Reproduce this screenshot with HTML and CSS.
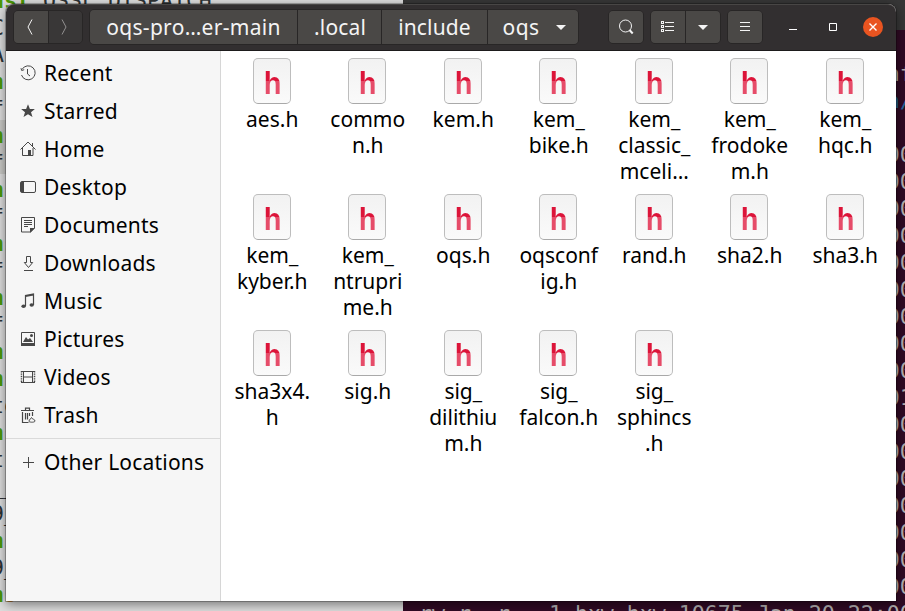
FILE: index.html
```
<!DOCTYPE html>
<html lang="en">
<head>
<meta charset="utf-8">
<title>oqs</title>
<link rel="stylesheet" href="styles.css">
</head>
<body>
<div class="desktop">
<div class="editor">
<pre><i>nst</i> OSSL_DISPATCH
C
A
<i>n</i><b>s</b>
f
<i>n</i><b>s</b>
f
<i>n</i><b>s</b>
f
<i>n</i><b>s</b>
f
<i>n</i><b>s</b>
f
<i>n</i><b>s</b>
<i>n</i><b>s</b>
to
<i>n</i><b>s</b>
t
__
9_
<i>n</i><b>s</b>
9_
<i>n</i><b>s</b>
        _
      d      h  f</pre>
</div>
<div class="terminal">
<div class="term-title">hxw@ubuntu: ~/Desktop/oqs-provider</div>
<pre class="term-text">
                                     nf
                                     <em>n/</em>

                                     00
                                     00
                                     00
                                     00
                                     00
                                     00
                                     00
                                     00
                                     00
                                     01
                                     00
                                     00
                                     00
                                     00
                                     00
                                     00
                                     00
-rw-r--r-- 1 hxw hxw 10675 Jan 20 22:00</pre>
</div>
</div>

<div class="window">
<header class="bar">
<div class="group nav">
<button class="btn"><svg width="14" height="20" viewBox="0 0 14 20"><path d="M9 2.500L5 10l4 7.500"/></svg></button>
<button class="btn off"><svg width="14" height="20" viewBox="0 0 14 20"><path d="M5 2.500L9 10l-4 7.500"/></svg></button>
</div>
<div class="group path">
<button class="btn p1"><span>oqs-pro…er-main</span></button>
<button class="btn p2"><span>.local</span></button>
<button class="btn p3"><span>include</span></button>
<button class="btn p4"><span>oqs</span><svg width="10" height="5" viewBox="0 0 10 5"><path class="fill" d="M0 0h10L5 5z"/></svg></button>
</div>
<div class="group search"><button class="btn"><svg width="16" height="16" viewBox="0 0 16 16"><circle cx="7.500" cy="7" r="6"/><path d="M11.500 11l3.200 3.500" stroke-width="2"/></svg></button></div>
<div class="group view">
<button class="btn"><svg width="14" height="12" viewBox="0 0 14 12" shape-rendering="crispEdges"><path d="M.5.5h2v2h-2zM.5 4.500h2v2h-2zM.5 8.500h2v2h-2zM4 1.500h9M4 5.500h9M4 9.500h9"/></svg></button>
<button class="btn"><svg width="10" height="5" viewBox="0 0 10 5"><path class="fill" d="M0 0h10L5 5z"/></svg></button>
</div>
<div class="group menu"><button class="btn"><svg width="10" height="10" viewBox="0 0 10 10"><path d="M0 .5h10M0 4.500h10M0 8.500h10"/></svg></button></div>
<div class="controls">
<svg class="min" width="8" height="8" viewBox="0 0 8 8"><path d="M0 6.500h8"/></svg>
<svg class="max" width="8" height="8" viewBox="0 0 8 8"><path d="M.5.5h7v7h-7z"/></svg>
<span class="close"><svg width="8" height="8" viewBox="0 0 8 8"><path d="M.5.5l7 7M7.500.5l-7 7" stroke-width="1.400"/></svg></span>
</div>
</header>
<div class="body">
<nav class="side">
<a><svg viewBox="0 0 16 16"><path d="M2.100 4.300A7 7 0 1 1 1.500 10M1 3.200l.7 2.300 2.500-.8M7.500 4v5l2.500 2"/></svg><span>Recent</span></a>
<a><svg viewBox="0 0 16 16"><path class="fill" d="M8 1.200l1.900 4.700 5 .1-3.900 3.200 1.500 4.900L8 11.300l-4.500 2.800L5 9.200 1.100 6l5-.1z"/></svg><span>Starred</span></a>
<a><svg viewBox="0 0 16 16"><path d="M.5 8.500L8 1l7.500 7.500M2.500 7v7.500h10.500V7M12.500 2v3"/><path class="fill" d="M8 9h3v6H8z"/></svg><span>Home</span></a>
<a><svg viewBox="0 0 16 16"><rect x=".5" y="2.500" width="15" height="11" rx="1.500"/><path class="fill" d="M1 3h3v10H1z"/></svg><span>Desktop</span></a>
<a><svg viewBox="0 0 16 16"><path d="M1.500.5h13v10.500l-4 4h-9zM4 3.500h8M4 5.500h8M4 7.500h8M4 9.500h4"/><path class="fill" d="M10 11h5l-5 5z"/></svg><span>Documents</span></a>
<a><svg viewBox="0 0 16 16"><path d="M6.500 1.500h4v6h2.200L8.500 12.500 4.300 7.500h2.200zM4 15.500h9"/></svg><span>Downloads</span></a>
<a><svg viewBox="0 0 16 16"><path d="M5.500 13V2.500l8-1.500v11M5.500 3.500l8-1.500" stroke-width="1.200"/><ellipse class="fill" cx="3.600" cy="13.300" rx="2.200" ry="1.800"/><ellipse class="fill" cx="11.700" cy="12" rx="2.200" ry="1.800"/></svg><span>Music</span></a>
<a><svg viewBox="0 0 16 16"><path d="M1.500 1.500h13v12h-13z"/><path class="fill" d="M1 12h14v3H1zM3 11l3-5 2 2.500L10 7l3 4z"/><circle class="fill" cx="11.500" cy="4.500" r="1.500"/></svg><span>Pictures</span></a>
<a><svg viewBox="0 0 16 16"><path d="M3.500 2v12M12.500 2v12M1 2.500h14M1 13.500h14M4 8h8.500"/><path d="M1.500 2v12M14.500 2v12" stroke-width="1.500" stroke-dasharray="1.400 1"/></svg><span>Videos</span></a>
<a><svg viewBox="0 0 16 16"><path d="M1 3.500h13M5.500 3V1.200h4V3M2.500 5v10.500h6M5.500 6v6.500M7.500 6v6.500M9.500 6v3M12.500 5v4" stroke-width="1.200"/><path d="M9 14.500c0-3 2-2 2.500-4 .5 2 3.500 1.500 3.500 3.500 0 1.500-5 1.500-6 .5z"/></svg><span>Trash</span></a>
<hr>
<a><svg viewBox="0 0 16 16"><path d="M8.500 3v11M3 8.500h11"/></svg><span>Other Locations</span></a>
</nav>
<main class="files">
<figure><div class="doc"><b>h</b></div><figcaption>aes.h</figcaption></figure>
<figure><div class="doc"><b>h</b></div><figcaption>commo<br>n.h</figcaption></figure>
<figure><div class="doc"><b>h</b></div><figcaption>kem.h</figcaption></figure>
<figure><div class="doc"><b>h</b></div><figcaption>kem_<br>bike.h</figcaption></figure>
<figure><div class="doc"><b>h</b></div><figcaption>kem_<br>classic_<br>mceli…</figcaption></figure>
<figure><div class="doc"><b>h</b></div><figcaption>kem_<br>frodoke<br>m.h</figcaption></figure>
<figure><div class="doc"><b>h</b></div><figcaption>kem_<br>hqc.h</figcaption></figure>
<figure><div class="doc"><b>h</b></div><figcaption>kem_<br>kyber.h</figcaption></figure>
<figure><div class="doc"><b>h</b></div><figcaption>kem_<br>ntrupri<br>me.h</figcaption></figure>
<figure><div class="doc"><b>h</b></div><figcaption>oqs.h</figcaption></figure>
<figure><div class="doc"><b>h</b></div><figcaption>oqsconf<br>ig.h</figcaption></figure>
<figure><div class="doc"><b>h</b></div><figcaption>rand.h</figcaption></figure>
<figure><div class="doc"><b>h</b></div><figcaption>sha2.h</figcaption></figure>
<figure><div class="doc"><b>h</b></div><figcaption>sha3.h</figcaption></figure>
<figure><div class="doc"><b>h</b></div><figcaption>sha3x4.<br>h</figcaption></figure>
<figure><div class="doc"><b>h</b></div><figcaption>sig.h</figcaption></figure>
<figure><div class="doc"><b>h</b></div><figcaption>sig_<br>dilithiu<br>m.h</figcaption></figure>
<figure><div class="doc"><b>h</b></div><figcaption>sig_<br>falcon.h</figcaption></figure>
<figure><div class="doc"><b>h</b></div><figcaption>sig_<br>sphincs<br>.h</figcaption></figure>
</main>
</div>
</div>
</body>
</html>
```
FILE: styles.css
```
* { box-sizing: border-box; }
body { margin: 0; width: 905px; height: 611px; overflow: hidden; position: relative; font: 21px/26px "Noto Sans", sans-serif; color: #000; }
svg { display: block; flex: none; fill: none; stroke: currentColor; }
svg .fill { fill: currentColor; stroke: none; }

/* windows behind */
.desktop { display: flex; width: 905px; height: 611px; overflow: hidden; }
pre { margin: 0; font: 21.59px/27px "DejaVu Sans Mono", monospace; }
.editor { width: 403px; height: 611px; flex: none; overflow: hidden; background: linear-gradient(#0000 120px, #c9c9c6 120px 174px, #0000 174px), #dedede; color: #2e3436; }
.editor pre { margin: -13px 0 0 -9px; }
.editor i { font-style: normal; font-weight: bold; color: #4e9a06; }
.editor b { font-weight: normal; color: #c68a3c; }
.terminal { flex: 1; height: 611px; background: #300a24; overflow: hidden; }
.term-title { height: 30px; background: #373737; color: #8b8b8b; font: bold 19px/24px "Noto Sans", sans-serif; padding-left: 20px; white-space: nowrap; overflow: hidden; }
.term-text { color: #b4b0b2; margin: 30px 0 0 3px; }
.term-text em { font-style: normal; color: #23659f; }

/* file manager window */
.window { position: absolute; left: 6px; top: 4px; width: 890px; height: 597px; border-radius: 8px 8px 0 0; background: #fff; box-shadow: 0 0 0 1px rgba(0,0,0,.25), 0 3px 12px rgba(0,0,0,.5); }
.bar { height: 47px; display: flex; align-items: center; padding: 0 13px 1px 7px; background: #322f30; border-top: 1px solid #484645; border-bottom: 1px solid #1d1b1c; border-radius: 8px 8px 0 0; color: #fff; }
.group { display: flex; height: 34px; border: 1px solid #282626; border-radius: 5px; overflow: hidden; flex: none; }
.btn { border: 0; border-left: 1px solid #282626; padding: 0; margin: 0; background: #4a4846; color: #f4f4f4; display: flex; align-items: center; justify-content: center; font: inherit; flex: 1; }
.btn:first-child { border-left: 0; }
.nav { width: 70px; }
.nav svg { margin-right: 2px; }
.btn.off { background: #393737; color: #929090; }
.path { margin-left: 6px; width: 490px; height: 36px; }
.path .btn { flex: none; letter-spacing: .15px; }
.path .p1 { width: 207px; letter-spacing: .3px; }
.path .p2 { width: 84px; padding-left: 1px; }
.path .p3 { width: 106px; }
.path .p4 { width: 91px; gap: 17px; padding-left: 3px; letter-spacing: .4px; }
.search { width: 36px; margin-left: 29px; }
.view { width: 71px; margin-left: 6px; }
.menu { width: 36px; margin-left: 6px; }
.controls { display: flex; align-items: center; margin-left: auto; }
.min { margin-right: 32px; }
.max { margin-right: 26px; }
.close { width: 20px; height: 20px; border-radius: 50%; background: #e95420; display: flex; align-items: center; justify-content: center; }
.body { display: flex; height: 550px; }
.side { width: 215px; flex: none; background: #f6f6f6; border-right: 1px solid #d6d6d6; padding-top: 3px; letter-spacing: .2px; }
.side a { display: flex; align-items: center; height: 38px; padding-left: 14px; gap: 8px; white-space: nowrap; }
.side svg { width: 16px; height: 16px; color: #474747; }
.side hr { margin: 4px 0; border: 0; border-top: 1px solid #dadada; }
.files { flex: 1; display: grid; grid-template-columns: repeat(7, 95.5px); grid-template-rows: repeat(3, 136px); align-content: start; padding: 7px 0 0 3px; }
figure { margin: 0; display: flex; flex-direction: column; align-items: center; }
.doc { width: 38px; height: 46px; flex: none; border: 1px solid #bdbdbd; border-bottom-color: #a9a9a9; border-radius: 5px; background: linear-gradient(#f2f2f2, #fafafa); display: flex; justify-content: center; padding-left: 1px; }
.doc b { font: bold 31.5px/48px "Liberation Sans", sans-serif; height: 44px; transform: scaleX(.92); background: linear-gradient(#dc1439 0 22px, #e64c69 22px); -webkit-background-clip: text; background-clip: text; color: transparent; }
figcaption { margin-top: 2px; padding-left: 1px; text-align: center; white-space: nowrap; }
```
